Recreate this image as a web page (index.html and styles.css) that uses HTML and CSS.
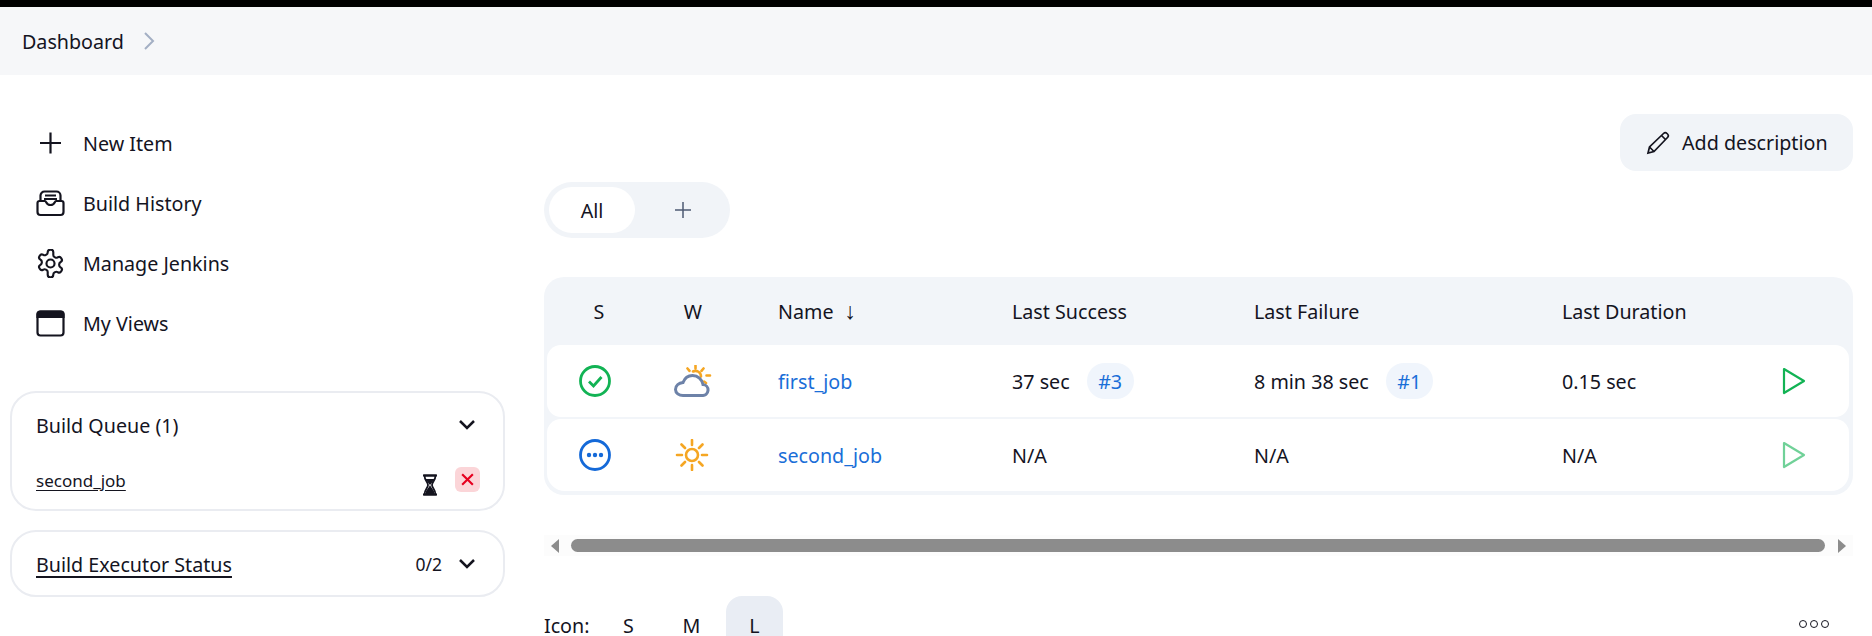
FILE: index.html
```html
<!DOCTYPE html>
<html lang="en">

<head>
    <meta charset="UTF-8">
    <meta name="viewport" content="width=device-width, initial-scale=1.0">
    <title>Dashboard [Jenkins]</title>
    <link rel="stylesheet" href="styles.css">
</head>

<body>
    <div class="breadcrumbs">
        <a class="crumb" href="#">Dashboard</a>
        <svg class="crumb_arrow" viewBox="0 0 12 20"><path d="M2 2l8 8-8 8" /></svg>
    </div>

    <div class="page">
        <aside class="sidebar">
            <nav class="tasks">
                <a class="task" href="#">
                    <svg class="task_icon" viewBox="0 0 29 29"><path d="M14.5 3.500v21M4 14h21" /></svg>
                    New Item
                </a>
                <a class="task" href="#">
                    <svg class="task_icon" viewBox="0 0 29 29">
                        <path d="M4.5 12V6.500a4 4 0 0 1 4-4h12a4 4 0 0 1 4 4V12" />
                        <path d="M9 6.500h11M8 10h13" />
                        <path d="M1.500 14a2 2 0 0 1 2-2H9c1.500 0 1 4 5.500 4s4-4 5.500-4h5.500a2 2 0 0 1 2 2v9a3 3 0 0 1-3 3h-20a3 3 0 0 1-3-3z" />
                    </svg>
                    Build History
                </a>
                <a class="task" href="#">
                    <svg class="task_icon gear" viewBox="1 0.500 22 23">
                        <path d="M12.220 1h-.44a2 2 0 0 0-2 2v.180a2 2 0 0 1-1 1.730l-.43.250a2 2 0 0 1-2 0l-.15-.08a2 2 0 0 0-2.730.730l-.22.380a2 2 0 0 0 .730 2.730l.150.100a2 2 0 0 1 1 1.720v.510a2 2 0 0 1-1 1.740l-.15.090a2 2 0 0 0-.73 2.730l.220.380a2 2 0 0 0 2.730.730l.150-.08a2 2 0 0 1 2 0l.430.250a2 2 0 0 1 1 1.730V21a2 2 0 0 0 2 2h.440a2 2 0 0 0 2-2v-.18a2 2 0 0 1 1-1.730l.430-.25a2 2 0 0 1 2 0l.150.080a2 2 0 0 0 2.730-.73l.220-.39a2 2 0 0 0-.73-2.730l-.15-.08a2 2 0 0 1-1-1.740v-.5a2 2 0 0 1 1-1.740l.150-.09a2 2 0 0 0 .730-2.730l-.22-.38a2 2 0 0 0-2.730-.73l-.15.080a2 2 0 0 1-2 0l-.43-.25a2 2 0 0 1-1-1.730V3a2 2 0 0 0-2-2z" />
                        <circle cx="12" cy="12" r="3.200" />
                    </svg>
                    Manage Jenkins
                </a>
                <a class="task" href="#">
                    <svg class="task_icon" viewBox="0 0 29 29">
                        <rect x="1.500" y="2.500" width="26" height="24" rx="3" />
                        <path class="solid" d="M1.500 8V5.500a3 3 0 0 1 3-3h20a3 3 0 0 1 3 3V8z" />
                    </svg>
                    My Views
                </a>
            </nav>

            <section class="pane queue">
                <div class="pane_head">
                    <span class="pane_title">Build Queue (1)</span>
                    <svg class="chevron" viewBox="0 0 18 12"><path d="M2 2l7 7 7-7" /></svg>
                </div>
                <div class="queue_row">
                    <a class="queue_job" href="#">second_job</a>
                    <svg class="hourglass" viewBox="0 0 16 22">
                        <path d="M1 1.500h14M1 20.500h14" />
                        <path d="M2.500 1.500c0 5 3.500 6.500 3.500 9.500s-3.500 4.500-3.500 9.500h11c0-5-3.500-6.500-3.500-9.500s3.500-4.500 3.500-9.500z" />
                        <path class="solid" d="M8 13c-1 2-3.500 3.500-3.500 6.500h7c0-3-2.500-4.500-3.500-6.500zM5 6h6L8 9.500z" />
                    </svg>
                    <a class="queue_stop" href="#">
                        <svg viewBox="0 0 14 14"><path d="M2 2l10 10M12 2L2 12" /></svg>
                    </a>
                </div>
            </section>

            <section class="pane">
                <div class="pane_head">
                    <a class="pane_title pane_link" href="#">Build Executor Status</a>
                    <span class="pane_count">0/2</span>
                    <svg class="chevron" viewBox="0 0 18 12"><path d="M2 2l7 7 7-7" /></svg>
                </div>
            </section>
        </aside>

        <main class="main">
            <div class="actions">
                <a class="add_desc" href="#">
                    <svg class="pencil" viewBox="0 0 24 24">
                        <path d="M2 22l1.500-6L17.500 2.500a2.500 2.500 0 0 1 3.500 0l.5.5a2.500 2.500 0 0 1 0 3.500L8 20.500z" />
                        <path d="M3.500 16L8 20.500M15.500 4.500l4 4" />
                    </svg>
                    Add description
                </a>
            </div>

            <div class="tabs">
                <a class="tab active" href="#">All</a>
                <a class="tab" href="#">
                    <svg class="tab_plus" viewBox="0 0 20 20"><path d="M10 2v16M2 10h16" /></svg>
                </a>
            </div>

            <div class="projects">
                <div class="row head">
                    <div class="cell_s">S</div>
                    <div class="cell_w">W</div>
                    <div class="cell_name">Name<span class="sort_arrow">↓</span></div>
                    <div>Last Success</div>
                    <div>Last Failure</div>
                    <div>Last Duration</div>
                    <div></div>
                </div>

                <div class="row job">
                    <div class="cell_s">
                        <svg class="status" viewBox="0 0 32 32">
                            <circle class="ok" cx="16" cy="16" r="14.500" />
                            <path class="ok" d="M10 16.500l4.500 4.500 8-9" />
                        </svg>
                    </div>
                    <div class="cell_w">
                        <svg class="weather" viewBox="0 0 38 32">
                            <path class="sun" d="M27 11.500a5.500 5.500 0 0 0-8-5M21.500 0.500v3M29.500 3.500l-2 2.300M36 10.500h-3.500M32 18l-2-1.500M13.500 3.500l2 2.300" />
                            <path class="cloud" d="M9 30.500h19a5.500 5.500 0 0 0 1-11c-1-5-5-9-10.500-9-5 0-8 3-9.500 7-4 .5-7.500 3-7.500 7 0 3.500 3.500 6 7.500 6z" />
                        </svg>
                    </div>
                    <div class="cell_name"><a class="job_link" href="#">first_job</a></div>
                    <div class="with_badge">37 sec <a class="badge" href="#">#3</a></div>
                    <div class="with_badge">8 min 38 sec <a class="badge" href="#">#1</a></div>
                    <div>0.15 sec</div>
                    <div class="cell_play">
                        <svg class="play" viewBox="0 0 24 28"><path d="M2 2l20 12L2 26z" /></svg>
                    </div>
                </div>

                <div class="row job">
                    <div class="cell_s">
                        <svg class="status" viewBox="0 0 32 32">
                            <circle class="queued" cx="16" cy="16" r="14.500" />
                            <circle class="queued_dot" cx="10" cy="16" r="2.200" />
                            <circle class="queued_dot" cx="16" cy="16" r="2.200" />
                            <circle class="queued_dot" cx="22" cy="16" r="2.200" />
                        </svg>
                    </div>
                    <div class="cell_w">
                        <svg class="weather" viewBox="0 0 38 32">
                            <circle class="sun" cx="18" cy="16" r="6" />
                            <path class="sun" d="M18 1v5M18 26v5M3 16h5M28 16h5M7.500 5.500l3.500 3.500M25 23l3.500 3.500M28.500 5.500L25 9M11 23l-3.500 3.500" />
                        </svg>
                    </div>
                    <div class="cell_name"><a class="job_link" href="#">second_job</a></div>
                    <div>N/A</div>
                    <div>N/A</div>
                    <div>N/A</div>
                    <div class="cell_play">
                        <svg class="play faded" viewBox="0 0 24 28"><path d="M2 2l20 12L2 26z" /></svg>
                    </div>
                </div>
            </div>

            <div class="scroller">
                <span class="scroll_left"></span>
                <span class="scroll_thumb"></span>
                <span class="scroll_right"></span>
            </div>

            <div class="footer">
                <div class="icon_sizes">
                    <span class="icon_label">Icon:</span>
                    <a class="size" href="#">S</a>
                    <a class="size" href="#">M</a>
                    <a class="size current" href="#">L</a>
                </div>
                <div class="dots">
                    <span class="dot"></span>
                    <span class="dot"></span>
                    <span class="dot"></span>
                </div>
            </div>
        </main>
    </div>
</body>

</html>
```

FILE: styles.css
```css
body {
    margin: 0;
    height: 636px;
    overflow: hidden;
    background-color: #ffffff;
    color: #14141f;
    font-family: "Noto Sans", "Open Sans", sans-serif;
    font-size: 19.700px;
    border-top: 7px solid #000000;
    box-sizing: border-box;
}

a {
    color: inherit;
    text-decoration: none;
}

svg {
    fill: none;
    stroke: currentColor;
    flex: none;
}

.solid {
    fill: currentColor;
}

.breadcrumbs {
    display: flex;
    align-items: center;
    height: 68px;
    padding-left: 22px;
    background-color: #f6f7f9;
}

.crumb_arrow {
    width: 12px;
    height: 20px;
    margin-left: 19px;
    color: #a3afc4;
    stroke-width: 2;
}

.page {
    display: flex;
}

.sidebar {
    width: 495px;
    margin-left: 10px;
    padding-top: 38px;
    flex: none;
}

.tasks {
    margin-bottom: 38px;
}

.task {
    display: flex;
    align-items: center;
    gap: 18px;
    height: 60px;
    padding-top: 1px;
    box-sizing: border-box;
    padding-left: 26px;
}

.task_icon {
    width: 29px;
    height: 29px;
    stroke-width: 2.200;
}

.task_icon.gear {
    stroke-width: 1.700;
}

.pane {
    border: 2px solid #eaecf1;
    border-radius: 26px;
    padding: 18px 24px 17px;
    margin-bottom: 19px;
}

.queue {
    padding-bottom: 0;
    height: 120px;
    box-sizing: border-box;
}

.pane_head {
    display: flex;
    align-items: center;
    height: 28px;
    gap: 16px;
}

.pane_title {
    margin-right: auto;
}

.pane_link {
    text-decoration: underline;
    text-decoration-thickness: 2px;
    text-underline-offset: 4px;
}

.chevron {
    width: 18px;
    height: 12px;
    margin-right: 3px;
    stroke-width: 2.500;
}

.pane_count {
    font-size: 17.500px;
}

.queue_row {
    display: flex;
    align-items: center;
    margin-top: 25px;
}

.queue_job {
    margin-right: auto;
    font-size: 17px;
    text-decoration: underline;
    text-underline-offset: 3px;
}

.hourglass {
    width: 16px;
    height: 22px;
    margin-top: 10px;
    stroke-width: 1.800;
}

.queue_stop {
    display: flex;
    align-items: center;
    justify-content: center;
    width: 25px;
    height: 25px;
    margin: -2px -1px 0 17px;
    border-radius: 6px;
    background-color: #fbd5d8;
    color: #e6001f;
}

.queue_stop svg {
    width: 15px;
    height: 15px;
    stroke-width: 2;
}

.main {
    width: 1309px;
    margin-left: 39px;
    padding-top: 39px;
    flex: none;
}

.actions {
    display: flex;
    justify-content: flex-end;
}

.add_desc {
    display: flex;
    align-items: center;
    gap: 12px;
    width: 233px;
    height: 57px;
    padding-left: 26px;
    box-sizing: border-box;
    border-radius: 16px;
    background-color: #f1f4f8;
}

.pencil {
    width: 24px;
    height: 24px;
    stroke-width: 1.700;
}

.tabs {
    display: flex;
    width: 186px;
    height: 56px;
    margin-top: 11px;
    padding: 5px;
    box-sizing: border-box;
    border-radius: 28px;
    background-color: #f1f4f8;
}

.tab {
    display: flex;
    align-items: center;
    justify-content: center;
    width: 86px;
    border-radius: 24px;
}

.tab.active {
    background-color: #ffffff;
}

.tab_plus {
    width: 20px;
    height: 20px;
    margin-left: 10px;
    color: #4e5a73;
    stroke-width: 1.500;
}

.projects {
    margin-top: 39px;
    padding: 0 4px 4px 3px;
    border-radius: 20px;
    background-color: #f2f5f9;
}

.row {
    display: grid;
    grid-template-columns: 96px 100px 269px 242px 308px 1fr 67px;
    align-items: center;
}

.row.head {
    height: 68px;
}

.row.job {
    height: 72px;
    background-color: #ffffff;
    border-radius: 14px;
}

.row.job + .row.job {
    margin-top: 2px;
    border-radius: 14px 14px 18px 18px;
}

.cell_s,
.cell_w {
    display: flex;
    justify-content: center;
}

.head .cell_s {
    padding-left: 8px;
}

.cell_name {
    padding-left: 35px;
}

.sort_arrow {
    margin-left: 11px;
    font-size: 23px;
    line-height: 1;
}

.status {
    width: 32px;
    height: 32px;
    stroke-width: 2.800;
}

.ok {
    stroke: #12b354;
}

.queued {
    stroke: #1469d8;
}

.queued_dot {
    stroke: none;
    fill: #1469d8;
}

.weather {
    width: 38px;
    height: 32px;
    stroke-width: 2.600;
    stroke-linecap: round;
}

.sun {
    stroke: #f5a623;
}

.cloud {
    stroke: #6d82a8;
    stroke-width: 3;
    fill: #ffffff;
}

.job_link {
    color: #1a6ed8;
}

.with_badge {
    display: flex;
    align-items: center;
    gap: 17px;
}

.badge {
    display: flex;
    align-items: center;
    justify-content: center;
    width: 47px;
    height: 36px;
    border-radius: 18px;
    background-color: #f0f5fc;
    color: #1a6ed8;
}

.cell_play {
    display: flex;
}

.play {
    width: 24px;
    height: 28px;
    stroke: #12b354;
    stroke-width: 2.200;
    stroke-linejoin: round;
}

.play.faded {
    opacity: 0.6;
}

.scroller {
    display: flex;
    align-items: center;
    height: 21px;
    margin-top: 40px;
    padding: 0 7px;
    background-color: #fcfcfc;
}

.scroll_left,
.scroll_right {
    border-top: 7px solid transparent;
    border-bottom: 7px solid transparent;
}

.scroll_left {
    border-right: 8px solid #8c8c8c;
}

.scroll_right {
    border-left: 8px solid #8c8c8c;
}

.scroll_thumb {
    flex: 1;
    height: 13px;
    margin: 0 13px 0 12px;
    border-radius: 7px;
    background-color: #8c8c8c;
}

.footer {
    display: flex;
    justify-content: space-between;
    margin-top: 40px;
}

.icon_sizes {
    display: flex;
    align-items: flex-start;
}

.icon_label {
    width: 46px;
    margin-right: 10px;
    padding-top: 20px;
    line-height: 20px;
}

.size {
    display: flex;
    justify-content: center;
    width: 57px;
    height: 40px;
    padding-top: 20px;
    line-height: 20px;
    margin-right: 6px;
    box-sizing: border-box;
    border-radius: 16px 16px 0 0;
}

.size.current {
    background-color: #e9edf4;
}

.dots {
    display: flex;
    gap: 3px;
    margin: 24px 24px 0 0;
}

.dot {
    width: 8px;
    height: 8px;
    box-sizing: border-box;
    border: 1.500px solid #14141f;
    border-radius: 50%;
}
```
